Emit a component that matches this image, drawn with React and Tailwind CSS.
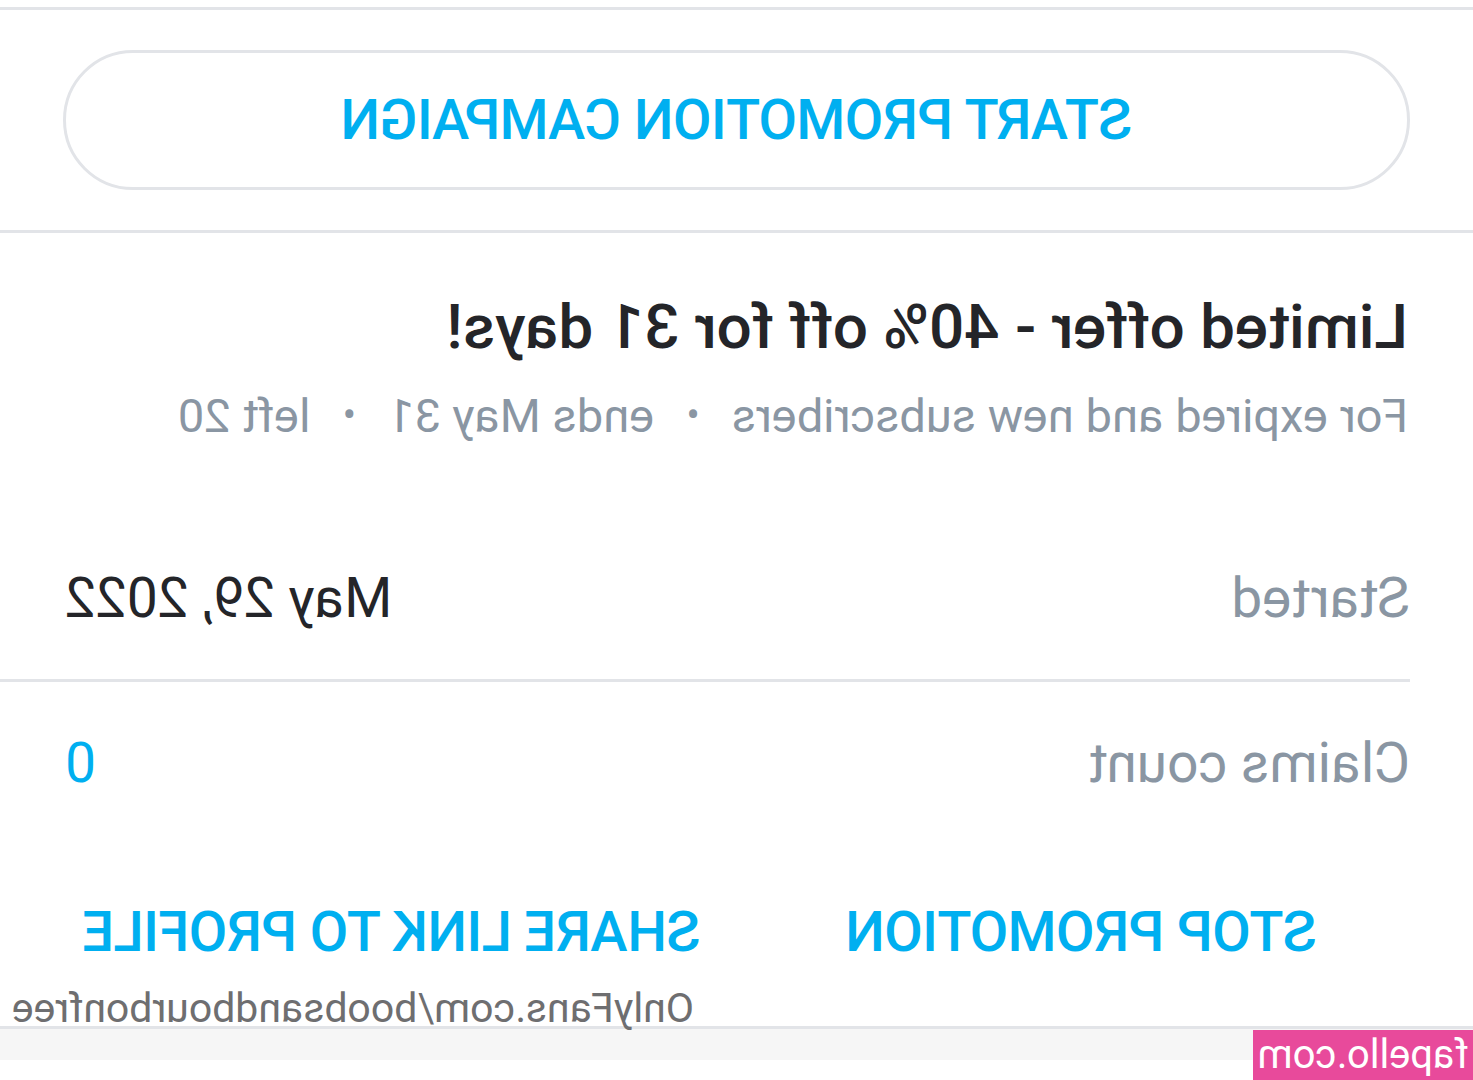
import React from "react";

const font = { fontFamily: "Roboto, 'Noto Sans', sans-serif" };

function InfoRow({ label, value, valueClass, divider }) {
  return (
    <div className={divider ? "ml-[63px] border-b-[3px] border-[#e2e4e8]" : "ml-[63px]"}>
      <div className="flex h-[162px] items-center justify-between pr-[65px]">
        <span className="text-[55px] text-[#8a96a3]">{label}</span>
        <span className={valueClass}>{value}</span>
      </div>
    </div>
  );
}

export default function App() {
  return (
    <div
      className="relative h-[1080px] w-[1473px] overflow-hidden bg-white -scale-x-100"
      style={font}
    >
      <div className="mt-[7px] border-t-[3px] border-[#e2e4e8]" />

      {/* campaign button */}
      <div className="px-[63px] pt-[40px] pb-[40px]">
        <button className="flex h-[140px] w-full items-center justify-center rounded-full border-[3px] border-[#e2e4e8] bg-white text-[56px] font-medium tracking-[-0.6px] text-[#00aff0]">
          START PROMOTION CAMPAIGN
        </button>
      </div>

      <div className="border-t-[3px] border-[#e2e4e8]" />

      {/* offer details */}
      <div className="px-[65px] pt-[54px]">
        <h2 className="text-[62px] font-medium leading-[80px] text-[#242529]">
          Limited offer - 40% off for 31 days!
        </h2>
        <p className="mt-[19px] flex items-center gap-[32px] text-[47px] leading-[60px] text-[#8a96a3]">
          <span>For expired and new subscribers</span>
          <span className="text-[40px]">•</span>
          <span>ends May 31</span>
          <span className="text-[40px]">•</span>
          <span>left 20</span>
        </p>
      </div>

      <div className="mt-[71px]">
        <InfoRow
          label="Started"
          value="May 29, 2022"
          valueClass="text-[55px] text-[#242529]"
          divider
        />
        <InfoRow label="Claims count" value="0" valueClass="text-[55px] text-[#00aff0]" />
      </div>

      {/* actions */}
      <div className="mt-[38px] flex h-[100px] items-center px-[47px]">
        <button className="flex-1 text-center text-[56px] font-medium tracking-[-0.6px] text-[#00aff0]">
          STOP PROMOTION
        </button>
        <button className="flex-1 text-center text-[56px] font-medium tracking-[-0.6px] text-[#00aff0]">
          SHARE LINK TO PROFILE
        </button>
      </div>

      {/* footer */}
      <div className="mt-[8px] pr-[12px] text-right text-[41px] leading-[36px] text-[#6e6e70]">
        OnlyFans.com/boobsandbourbonfree
      </div>
      <div className="h-[34px] border-t-[3px] border-[#e2e4e8] bg-[#f6f6f6]" />

      <div className="absolute bottom-0 left-0 flex h-[50px] w-[220px] items-center justify-center bg-[#e84a9b] text-[40px] text-white">
        fapello.com
      </div>
    </div>
  );
}
